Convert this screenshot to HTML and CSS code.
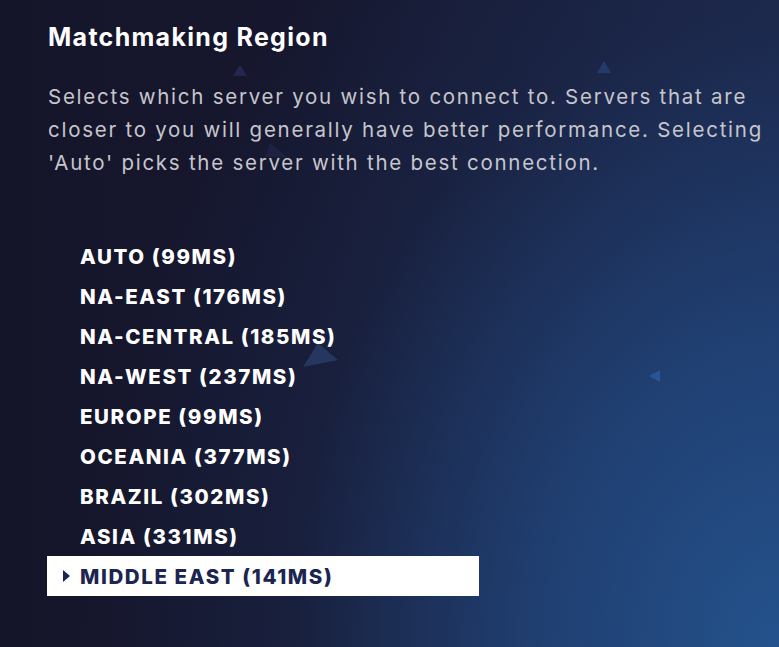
FILE: index.html
```html
<!DOCTYPE html>
<html lang="en">
<head>
<meta charset="utf-8">
<link rel="stylesheet" href="styles.css">
</head>
<body>
<div class="screen">
  <svg class="deco" width="779" height="647" viewBox="0 0 779 647" aria-hidden="true">
    <polygon points="233,76 240,65 247,76" fill="#23284a"/>
    <polygon points="597,73 604,61 611,73" fill="#243a6a"/>
    <polygon points="265,157 270,143 288,158" fill="#1d2242"/>
    <polygon points="303,367 318,343 338,360" fill="#26365f"/>
    <polygon points="649,376 660,370 660,382" fill="#2a5594"/>
  </svg>
  <main class="panel">
    <h1 class="title">Matchmaking Region</h1>
    <p class="desc">Selects which server you wish to connect to. Servers that are closer to you will generally have better performance. Selecting 'Auto' picks the server with the best connection.</p>
    <ul class="regions">
      <li class="region">AUTO (99MS)</li>
      <li class="region">NA-EAST (176MS)</li>
      <li class="region">NA-CENTRAL (185MS)</li>
      <li class="region">NA-WEST (237MS)</li>
      <li class="region">EUROPE (99MS)</li>
      <li class="region">OCEANIA (377MS)</li>
      <li class="region">BRAZIL (302MS)</li>
      <li class="region">ASIA (331MS)</li>
      <li class="region selected"><span class="marker"></span>MIDDLE EAST (141MS)</li>
    </ul>
  </main>
</div>
</body>
</html>
```
FILE: styles.css
```css
html, body {
  margin: 0;
  padding: 0;
}
body {
  width: 779px;
  height: 647px;
  overflow: hidden;
  font-family: Inter, "Noto Sans", sans-serif;
}
.screen {
  position: relative;
  width: 779px;
  height: 647px;
  background:
    radial-gradient(ellipse 700px 900px at 100% 100%, rgba(36, 82, 140, 1) 0%, rgba(33, 68, 122, 0.85) 35%, rgba(30, 50, 95, 0.3) 70%, rgba(30, 50, 95, 0) 100%),
    linear-gradient(90deg, #15152a 0%, #16172e 40%, #1b2444 100%);
}
.deco {
  position: absolute;
  left: 0;
  top: 0;
}
.panel {
  position: relative;
  padding: 22px 0 0 48px;
}
.title {
  margin: 0;
  font-size: 25px;
  line-height: 30px;
  font-weight: 700;
  color: #ffffff;
  letter-spacing: 1.3px;
}
.desc {
  margin: 28px 0 0 0;
  width: 725px;
  font-size: 20.5px;
  line-height: 33px;
  font-weight: 400;
  color: #c6c6cc;
  letter-spacing: 1.74px;
}
.regions {
  list-style: none;
  margin: 57px 0 0 -1px;
  padding: 0;
  width: 432px;
}
.region {
  display: flex;
  align-items: center;
  height: 40px;
  padding-left: 33px;
  font-size: 20.5px;
  font-weight: 800;
  color: #ffffff;
  letter-spacing: 1.6px;
}
.region.selected {
  position: relative;
  background: #ffffff;
  color: #1b2550;
}
.marker {
  position: absolute;
  left: 16px;
  top: 14px;
  width: 0;
  height: 0;
  border-top: 6px solid transparent;
  border-bottom: 6px solid transparent;
  border-left: 7px solid #1b2550;
}
```
